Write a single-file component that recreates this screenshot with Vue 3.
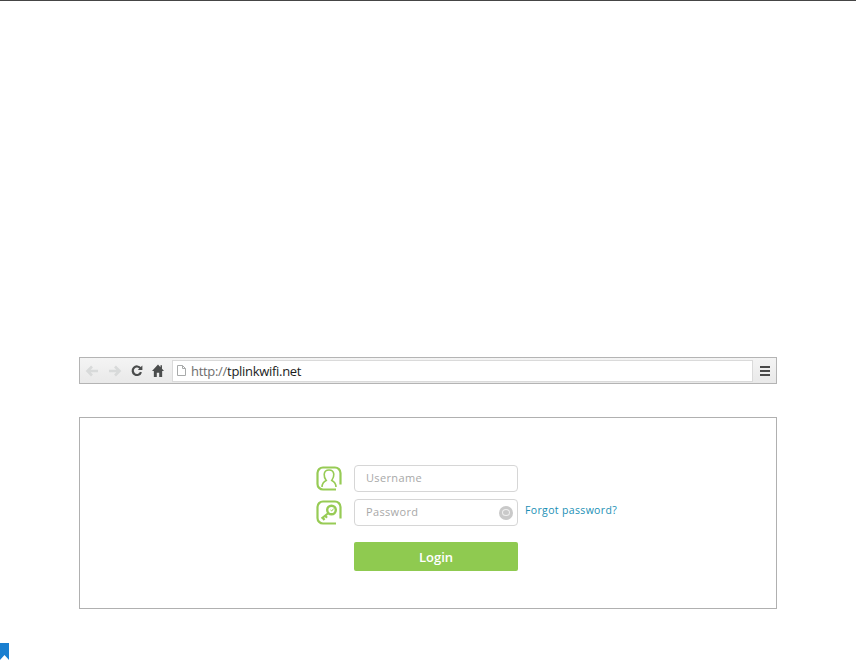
<script setup>
</script>

<template>
  <div class="page">
    <div class="browser">
      <div class="nav">
        <svg class="nav-icon" width="14" height="12" viewBox="0 0 14 12"><path d="M7 1.500 2.500 6 7 10.500M3 6h10" fill="none" stroke="#d8dada" stroke-width="2.600"/></svg>
        <svg class="nav-icon" width="14" height="12" viewBox="0 0 14 12"><path d="M7 1.500 11.500 6 7 10.500M11 6H1" fill="none" stroke="#d8dada" stroke-width="2.600"/></svg>
        <svg class="nav-icon" width="12" height="13" viewBox="0 0 13 13"><path d="M10.300 4.200A4.600 4.600 0 1 0 10.800 8.300" fill="none" stroke="#4a4c4c" stroke-width="2.400"/><path d="M12.300 1v5h-5z" fill="#4a4c4c"/></svg>
        <svg class="nav-icon" width="12" height="13" viewBox="0 0 13 12" preserveAspectRatio="none"><path d="M6.500 .5 0 6.500h2V12h3.200V8h2.600v4H11V6.500h2L10.800 4.400V1.200H9.200v1.700z" fill="#4a4c4c"/></svg>
      </div>
      <div class="address">
        <svg width="9" height="11" viewBox="0 0 9 11"><path d="M.5.500h5l3 3v7h-8zM5.500.500v3h3" fill="#fff" stroke="#a8aaaa"/></svg>
        <span class="url"><span class="scheme">http://</span>tplinkwifi.net</span>
      </div>
      <div class="menu"><i></i><i></i><i></i></div>
    </div>

    <div class="login-box">
      <div class="form">
        <svg class="field-icon" width="26" height="25" viewBox="0 0 26 25">
          <path d="M20 23.500H7A5.500 5.500 0 0 1 1.500 18V7A5.500 5.500 0 0 1 7 1.500h12A5.500 5.500 0 0 1 24.500 7v11.500" fill="none" stroke="#97cb55" stroke-width="2.200"/>
          <path d="M6 21c.2-4 1.500-5.500 4.200-6.600-1.500-2.200-2.200-4-2-6.200C8.500 5.400 10.500 4 13 4s4.500 1.400 4.800 4.200c.2 2.200-.5 4-2 6.200 2.700 1.100 4 2.600 4.200 6.600" fill="none" stroke="#97cb55" stroke-width="1.600"/>
        </svg>
        <div class="input"><span>Username</span></div>
        <span></span>

        <svg class="field-icon" width="26" height="25" viewBox="0 0 26 25">
          <path d="M20 23.500H7A5.500 5.500 0 0 1 1.500 18V7A5.500 5.500 0 0 1 7 1.500h12A5.500 5.500 0 0 1 24.500 7v11.500" fill="none" stroke="#97cb55" stroke-width="2.200"/>
          <circle cx="15.500" cy="10" r="4.300" fill="none" stroke="#97cb55" stroke-width="2.400"/>
          <path d="M12.500 13 5.500 18.500M6.500 17.500l2 2.500M9 15.500l2 2.200" fill="none" stroke="#97cb55" stroke-width="2.200"/>
          <path d="M14.500 10l1.200 1 2-2.500" fill="none" stroke="#97cb55" stroke-width="1"/>
        </svg>
        <div class="input password">
          <span>Password</span>
          <div class="eye"><b></b></div>
        </div>
        <a class="forgot">Forgot password?</a>

        <span></span>
        <button class="login">Login</button>
      </div>
    </div>

    <div class="bookmark"></div>
  </div>
</template>

<style scoped>
.page {
  width: 856px;
  height: 660px;
  box-sizing: border-box;
  border-top: 1px solid #454545;
  padding-top: 356px;
  overflow: hidden;
  background: #fff;
  font-family: "Open Sans", "Liberation Sans", sans-serif;
}
.browser {
  margin-left: 79px;
  width: 698px;
  height: 27px;
  box-sizing: border-box;
  border: 1px solid #b4b4b4;
  background: linear-gradient(#f4f4f4, #e9e9e9);
  display: flex;
  align-items: center;
}
.nav {
  display: flex;
  align-items: center;
  gap: 9px;
  padding-left: 5px;
  width: 92px;
  box-sizing: border-box;
}
.nav-icon { flex: none; }
.address {
  flex: 1;
  height: 22px;
  box-sizing: border-box;
  border: 1px solid #dadada;
  background: #fff;
  display: flex;
  align-items: center;
  gap: 5px;
  padding-left: 4px;
}
.url {
  font-size: 13px;
  letter-spacing: -.3px;
  color: #1c1c1c;
  line-height: 20px;
}
.scheme { color: #6e6e6e; }
.menu {
  width: 23px;
  display: flex;
  flex-direction: column;
  align-items: center;
  gap: 2px;
}
.menu i {
  display: block;
  width: 10px;
  height: 2px;
  background: #4a4a4a;
}
.login-box {
  margin: 33px 0 0 79px;
  width: 698px;
  height: 192px;
  box-sizing: border-box;
  border: 1px solid #b0b0b0;
  padding: 47px 0 0 236px;
}
.form {
  display: grid;
  grid-template-columns: 26px 164px auto;
  column-gap: 12px;
  row-gap: 7px;
  align-items: center;
}
.form > :nth-child(3n) { margin-left: -5px; }
.field-icon { display: block; }
.input {
  height: 27px;
  box-sizing: border-box;
  border: 1px solid #d6d6d6;
  border-radius: 4px;
  display: flex;
  align-items: center;
  justify-content: space-between;
  padding: 0 4px 2px 11px;
  font-size: 11px;
  letter-spacing: .35px;
  color: #a8a8a8;
}
.eye {
  width: 14px;
  height: 14px;
  margin-top: 2px;
  border-radius: 50%;
  background: #c9c9c9;
  display: flex;
  align-items: center;
  justify-content: center;
}
.eye b {
  width: 6px;
  height: 5px;
  border: 1px solid #f0f0f0;
  border-radius: 50%;
}
.forgot {
  font-size: 10.500px;
  letter-spacing: .35px;
  color: #1a8fb5;
  white-space: nowrap;
  margin-bottom: 6px;
}
.login {
  grid-column: 2;
  margin-top: 9px;
  height: 29px;
  border: 0;
  border-radius: 2px;
  background: #8fca50;
  color: #fff;
  font: 600 13px "Open Sans", "Liberation Sans", sans-serif;
  padding: 0;
}
.bookmark {
  margin-top: 34px;
  width: 9px;
  height: 17px;
  background: #1a7fd0;
  clip-path: polygon(0 0, 100% 0, 100% 100%, 50% 70%, 0 100%);
}
</style>
